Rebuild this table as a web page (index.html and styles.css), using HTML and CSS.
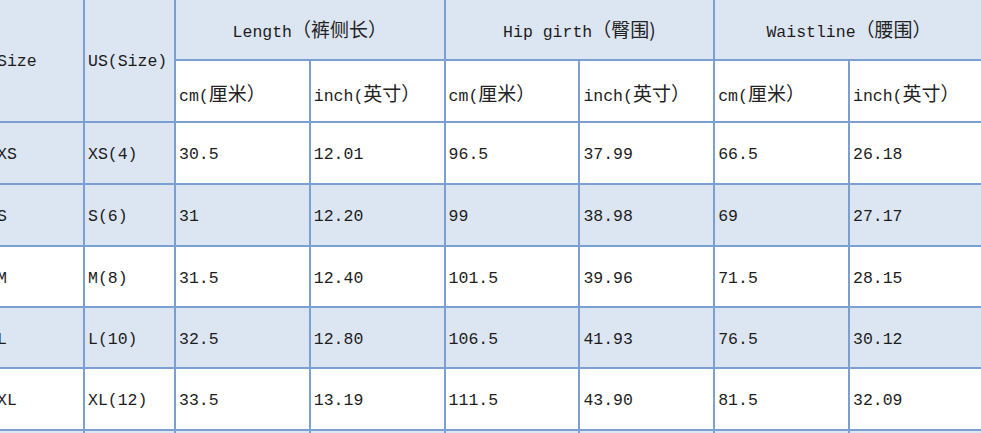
FILE: index.html
```html
<!DOCTYPE html>
<html lang="zh">
<head>
<meta charset="utf-8">
<title>Size chart</title>
<link rel="stylesheet" href="styles.css">
</head>
<body>
<table class="chart">
  <colgroup>
    <col class="c-narrow"><col class="c-narrow">
    <col class="c-wide"><col class="c-wide"><col class="c-wide">
    <col class="c-wide"><col class="c-wide"><col class="c-wide">
  </colgroup>
  <thead>
    <tr class="h1">
      <th rowspan="2" class="blue left">Size</th>
      <th rowspan="2" class="blue left">US(Size)</th>
      <th colspan="2" class="blue group">Length<span class="zh">（裤侧长）</span></th>
      <th colspan="2" class="blue group">Hip girth<span class="zh">（臀围)</span></th>
      <th colspan="2" class="blue group">Waistline<span class="zh">（腰围）</span></th>
    </tr>
    <tr class="h2">
      <th class="left sub">cm(<span class="zh">厘米）</span></th>
      <th class="left sub">inch(<span class="zh">英寸）</span></th>
      <th class="left sub">cm(<span class="zh">厘米）</span></th>
      <th class="left sub">inch(<span class="zh">英寸）</span></th>
      <th class="left sub">cm(<span class="zh">厘米）</span></th>
      <th class="left sub">inch(<span class="zh">英寸）</span></th>
    </tr>
  </thead>
  <tbody>
    <tr class="r62">
      <td class="blue">XS</td><td class="blue">XS(4)</td>
      <td>30.5</td><td>12.01</td><td>96.5</td><td>37.99</td><td>66.5</td><td>26.18</td>
    </tr>
    <tr class="r62 blue-row">
      <td>S</td><td>S(6)</td>
      <td>31</td><td>12.20</td><td>99</td><td>38.98</td><td>69</td><td>27.17</td>
    </tr>
    <tr class="r61">
      <td>M</td><td>M(8)</td>
      <td>31.5</td><td>12.40</td><td>101.5</td><td>39.96</td><td>71.5</td><td>28.15</td>
    </tr>
    <tr class="r61 blue-row">
      <td>L</td><td>L(10)</td>
      <td>32.5</td><td>12.80</td><td>106.5</td><td>41.93</td><td>76.5</td><td>30.12</td>
    </tr>
    <tr class="r62">
      <td>XL</td><td>XL(12)</td>
      <td>33.5</td><td>13.19</td><td>111.5</td><td>43.90</td><td>81.5</td><td>32.09</td>
    </tr>
    <tr class="r62 blue-row">
      <td></td><td></td><td></td><td></td><td></td><td></td><td></td><td></td>
    </tr>
  </tbody>
</table>
</body>
</html>
```

FILE: styles.css
```css
html, body {
  margin: 0;
  padding: 0;
  background: #ffffff;
  overflow: hidden;
  width: 981px;
  height: 433px;
}

.chart {
  border-collapse: collapse;
  table-layout: fixed;
  width: 991px;
  margin-left: -8px;
  margin-top: -3px;
  font-family: "Liberation Mono", "Noto Sans CJK SC", monospace;
  font-size: 16.5px;
  color: #1c1c1c;
}

.c-narrow { width: 91px; }
.c-wide { width: 134.8px; }

.chart th,
.chart td {
  border: 2px solid #7b9fd1;
  padding: 4px 0 0 3px;
  text-align: left;
  vertical-align: middle;
  font-weight: normal;
  white-space: nowrap;
  overflow: hidden;
  line-height: 20px;
}

.chart th.group {
  text-align: center;
  padding: 4px 0 0 0;
}

.chart th.sub {
  padding-top: 8px;
}

.blue,
.blue-row td {
  background: #dce6f2;
}

.h1 { height: 62px; }
.h2 { height: 62px; }
.r62 { height: 62px; }
.r61 { height: 61px; }

.zh {
  font-family: "Noto Sans CJK SC", sans-serif;
  font-size: 19px;
  line-height: 20px;
  color: #222222;
}
```
